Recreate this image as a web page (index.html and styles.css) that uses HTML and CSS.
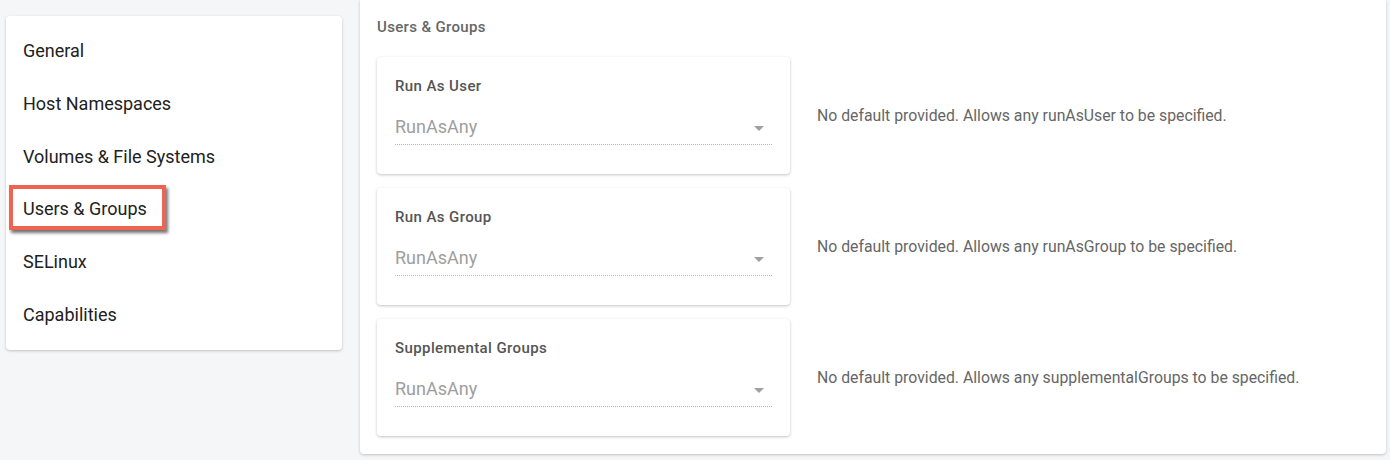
FILE: index.html
```html
<!DOCTYPE html>
<html>
<head>
<meta charset="utf-8">
<link rel="stylesheet" href="styles.css">
</head>
<body>
<div class="page">
  <nav class="nav-card">
    <div class="nav-item">General</div>
    <div class="nav-item">Host Namespaces</div>
    <div class="nav-item">Volumes &amp; File Systems</div>
    <div class="nav-item nav-item--marked">Users &amp; Groups<span class="mark-box"></span></div>
    <div class="nav-item">SELinux</div>
    <div class="nav-item">Capabilities</div>
  </nav>
  <main class="panel">
    <h2 class="panel-title">Users &amp; Groups</h2>
    <div class="rows">
      <div class="row">
        <div class="field-card">
          <div class="field-label">Run As User</div>
          <div class="select">
            <span class="select-value">RunAsAny</span>
            <span class="select-arrow"></span>
          </div>
        </div>
        <div class="row-desc">No default provided. Allows any runAsUser to be specified.</div>
      </div>
      <div class="row">
        <div class="field-card">
          <div class="field-label">Run As Group</div>
          <div class="select">
            <span class="select-value">RunAsAny</span>
            <span class="select-arrow"></span>
          </div>
        </div>
        <div class="row-desc">No default provided. Allows any runAsGroup to be specified.</div>
      </div>
      <div class="row">
        <div class="field-card">
          <div class="field-label">Supplemental Groups</div>
          <div class="select">
            <span class="select-value">RunAsAny</span>
            <span class="select-arrow"></span>
          </div>
        </div>
        <div class="row-desc">No default provided. Allows any supplementalGroups to be specified.</div>
      </div>
    </div>
  </main>
</div>
</body>
</html>
```
FILE: styles.css
```css
* { box-sizing: border-box; }
html, body { margin: 0; padding: 0; }
body {
  background: #f5f6f8;
  font-family: Roboto, "Liberation Sans", Arial, sans-serif;
  width: 1390px;
  height: 460px;
  overflow: hidden;
}
.page {
  display: flex;
  align-items: flex-start;
}
.nav-card {
  margin: 16px 0 0 6px;
  width: 336px;
  height: 334px;
  background: #fff;
  border-radius: 4px;
  box-shadow: 0 1px 3px rgba(0,0,0,0.22);
  padding: 9px 0 8px;
}
.nav-item {
  position: relative;
  height: 52.8px;
  line-height: 52.8px;
  padding-left: 17px;
  font-size: 18px;
  color: #212121;
}
.mark-box {
  position: absolute;
  left: 3px;
  top: 2px;
  width: 157px;
  height: 45px;
  border: 4px solid #ee6352;
  box-shadow: 2px 3px 3px rgba(0,0,0,0.55);
}
.panel {
  margin-left: 18px;
  width: 1026px;
  height: 454px;
  background: #fff;
  border-radius: 0 0 4px 4px;
  box-shadow: 0 1px 3px rgba(0,0,0,0.22);
  padding: 17px 0 0 17px;
}
.panel-title {
  margin: 0 0 20px;
  font-size: 15px;
  letter-spacing: 0.35px;
  line-height: 20px;
  font-weight: 500;
  color: #666;
}
.rows {
  display: flex;
  flex-direction: column;
  gap: 14px;
}
.row {
  display: flex;
  align-items: center;
  gap: 27px;
}
.field-card {
  width: 413px;
  height: 117px;
  background: #fff;
  border-radius: 4px;
  box-shadow: 0 1px 3px rgba(0,0,0,0.24);
  padding: 19px 18px 0;
}
.field-label {
  font-size: 15px;
  letter-spacing: 0.4px;
  line-height: 20px;
  font-weight: 500;
  color: #555;
}
.select {
  margin-top: 19px;
  display: flex;
  align-items: center;
  justify-content: space-between;
  border-bottom: 1px dotted #b5b5b5;
  padding-bottom: 5px;
}
.select-value {
  font-size: 18px;
  line-height: 24px;
  color: #9e9e9e;
}
.select-arrow {
  width: 0;
  height: 0;
  border-left: 5px solid transparent;
  border-right: 5px solid transparent;
  border-top: 5px solid #a0a0a0;
  margin-right: 8px;
  margin-top: 2px;
}
.row-desc {
  font-size: 15.8px;
  color: #666;
}
```
